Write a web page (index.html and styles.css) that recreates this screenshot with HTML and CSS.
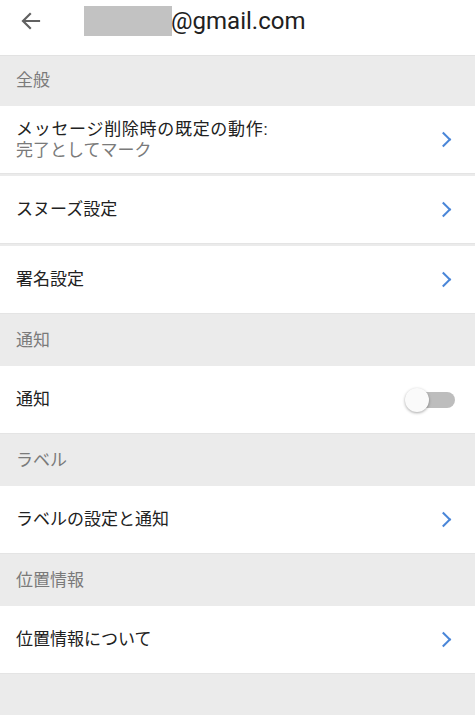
FILE: index.html
```html
<!DOCTYPE html>
<html lang="ja">
<head>
  <meta charset="UTF-8" />
  <meta name="viewport" content="width=device-width, initial-scale=1" />
  <title>設定</title>
  <link rel="stylesheet" href="styles.css">
</head>
<body>

  <div class="topbar">
    <svg class="back" width="24" height="24" viewBox="0 0 24 24">
      <path d="M20 12H5M11 5l-7 7 7 7" fill="none" stroke="#616161" stroke-width="2.2" stroke-linecap="square"/>
    </svg>
    <div class="account"><span class="masked"></span>@gmail.com</div>
  </div>

  <div class="section first">全般</div>
  <div class="list">
    <div class="row">
      <div class="text">
        <div class="label wide">メッセージ削除時の既定の動作:</div>
        <div class="sub">完了としてマーク</div>
      </div>
      <span class="chevron"></span>
    </div>
    <div class="row">
      <div class="label">スヌーズ設定</div>
      <span class="chevron"></span>
    </div>
    <div class="row">
      <div class="label">署名設定</div>
      <span class="chevron"></span>
    </div>
  </div>

  <div class="section">通知</div>
  <div class="list">
    <div class="row">
      <div class="label">通知</div>
      <span class="switch"><span class="thumb"></span></span>
    </div>
  </div>

  <div class="section">ラベル</div>
  <div class="list">
    <div class="row">
      <div class="label">ラベルの設定と通知</div>
      <span class="chevron"></span>
    </div>
  </div>

  <div class="section">位置情報</div>
  <div class="list">
    <div class="row">
      <div class="label">位置情報について</div>
      <span class="chevron"></span>
    </div>
  </div>

</body>
</html>
```

FILE: styles.css
```css
body {
  margin: 0;
  background: #ebebeb;
  font-family: Roboto, "Noto Sans CJK JP", sans-serif;
  color: #212121;
  min-height: 715px;
}
.topbar {
  height: 55px;
  background: #fff;
  border-bottom: 1px solid #e2e2e2;
  display: flex;
  align-items: center;
}
.back {
  margin-left: 19px;
  margin-top: -14px;
}
.account {
  margin-left: 41px;
  margin-top: -14px;
  font-size: 24px;
  color: #212121;
  display: flex;
  align-items: center;
}
.masked {
  display: inline-block;
  width: 88px;
  height: 30px;
  background: #c2c2c2;
  margin-right: -1px;
}
.section {
  height: 52px;
  line-height: 52px;
  padding-left: 16px;
  font-size: 17px;
  color: #7a7a7a;
}
.section.first {
  height: 50px;
  line-height: 48px;
}
.list {
  display: flex;
  flex-direction: column;
  gap: 2px;
}
.row {
  height: 67px;
  background: #fff;
  display: flex;
  align-items: center;
  justify-content: space-between;
  padding: 0 22px 0 16px;
  border-bottom: 1px solid #e4e4e4;
}
.label {
  font-size: 17px;
  line-height: 21px;
}
.label.wide {
  letter-spacing: 0.7px;
}
.sub {
  font-size: 17px;
  line-height: 21px;
  color: #7a7a7a;
}
.chevron {
  width: 9px;
  height: 9px;
  border-right: 2.5px solid #4a86d8;
  border-bottom: 2.5px solid #4a86d8;
  transform: rotate(-45deg);
  margin-right: 4px;
}
.switch {
  position: relative;
  width: 42px;
  height: 16px;
  border-radius: 8px;
  background: #bdbdbd;
  margin-right: -2px;
}
.thumb {
  position: absolute;
  left: -8px;
  top: -4px;
  width: 24px;
  height: 24px;
  border-radius: 50%;
  background: #fafafa;
  box-shadow: 0 1px 3px rgba(0, 0, 0, 0.35);
}
```
